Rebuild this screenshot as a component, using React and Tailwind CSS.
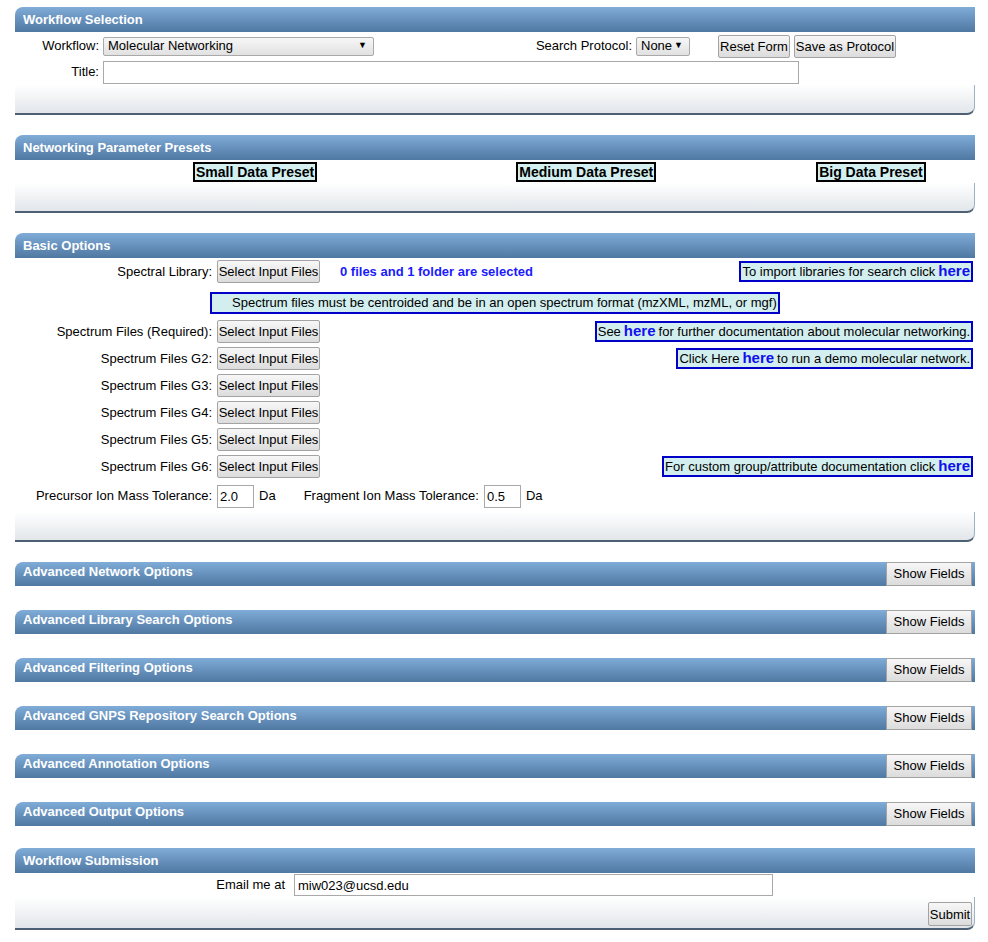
import React from 'react';

const FONT = { fontFamily: '"Liberation Sans", Arial, sans-serif' };

function Header({ title, children }) {
  return (
    <div className="flex h-[25px] items-center justify-between rounded-tl-[8px] bg-gradient-to-b from-[#80acd8] to-[#4f78a2] pl-[8px]">
      <span className="text-[13px] font-bold text-white">{title}</span>
      {children}
    </div>
  );
}

function Footer({ children, h = 'h-[30px]' }) {
  return (
    <div className={`${h} flex items-center justify-end rounded-br-[8px] border-r border-b-2 border-r-[#9fb0c2] border-b-[#4d6074] bg-gradient-to-b from-white to-[#e2e6ea] pr-[2px]`}>
      {children}
    </div>
  );
}

function Btn({ children, className = '' }) {
  return (
    <button className={`h-[23px] whitespace-nowrap rounded-[2px] border border-[#a3a3a3] bg-gradient-to-b from-[#f7f7f7] to-[#dcdcdc] px-0 text-[13px] leading-none text-black ${className}`}>
      {children}
    </button>
  );
}

function FakeSelect({ value, className = '' }) {
  return (
    <div className={`flex h-[19px] items-center justify-between rounded-[2px] border border-[#a9a9a9] bg-gradient-to-b from-[#f7f7f7] to-[#e1e1e1] pl-[4px] pr-[6px] text-[13px] ${className}`}>
      <span>{value}</span>
      <span className="text-[9px]">▼</span>
    </div>
  );
}

function InfoBox({ children }) {
  return (
    <div className="flex h-[21px] items-center whitespace-nowrap border-2 border-[#0000c8] bg-[#d2eeee] px-[1px] text-[13px] text-black">
      {children}
    </div>
  );
}

function Here({ end }) {
  return (
    <span className={`${end ? 'ml-[3px]' : 'mx-[3px]'} text-[15px] font-bold text-[#1010ee]`}>here</span>
  );
}

function FileRow({ label, right }) {
  return (
    <div className="flex h-[27px] items-center pr-[2px]">
      <div className="w-[197px] text-right">{label}</div>
      <Btn className="ml-[5px] w-[103px]">Select Input Files</Btn>
      <div className="flex flex-1 justify-end">{right}</div>
    </div>
  );
}

const ADVANCED = [
  'Advanced Network Options',
  'Advanced Library Search Options',
  'Advanced Filtering Options',
  'Advanced GNPS Repository Search Options',
  'Advanced Annotation Options',
  'Advanced Output Options',
];

export default function App() {
  return (
    <div className="min-h-[942px] bg-white pl-[15px] pr-[13px] pt-[7px] text-[13px] text-black" style={FONT}>
      {/* Workflow Selection */}
      <section>
        <Header title="Workflow Selection" />
        <div className="flex h-[27px] items-center pt-[1px]">
          <div className="w-[84px] text-right">Workflow:</div>
          <FakeSelect value="Molecular Networking" className="ml-[4px] w-[271px]" />
          <div className="w-[258px] text-right">Search Protocol:</div>
          <FakeSelect value="None" className="ml-[4px] w-[54px]" />
          <Btn className="ml-[28px] w-[72px]">Reset Form</Btn>
          <Btn className="ml-[4px] w-[102px]">Save as Protocol</Btn>
        </div>
        <div className="flex h-[26px] items-center">
          <div className="w-[84px] text-right">Title:</div>
          <input className="ml-[4px] h-[23px] w-[696px] border border-[#a9a9a9] bg-white" />
        </div>
        <Footer />
      </section>

      {/* Presets */}
      <section className="mt-[20px]">
        <Header title="Networking Parameter Presets" />
        <div className="flex h-[23px] items-center">
          <button className="ml-[178px] h-[20px] border-2 border-black bg-[#d3efef] px-[1px] text-[14px] leading-none font-bold">Small Data Preset</button>
          <button className="ml-[199px] h-[20px] border-2 border-black bg-[#d3efef] px-[1px] text-[14px] leading-none font-bold">Medium Data Preset</button>
          <button className="ml-[160px] h-[20px] border-2 border-black bg-[#d3efef] px-[1px] text-[14px] leading-none font-bold">Big Data Preset</button>
        </div>
        <Footer />
      </section>

      {/* Basic Options */}
      <section className="mt-[20px]">
        <Header title="Basic Options" />
        <div className="flex h-[27px] items-center pr-[2px]">
          <div className="w-[197px] text-right">Spectral Library:</div>
          <Btn className="ml-[5px] w-[103px]">Select Input Files</Btn>
          <span className="ml-[20px] font-bold text-[#1a1aff]">0 files and 1 folder are selected</span>
          <div className="flex flex-1 justify-end">
            <InfoBox>To import libraries for search click<Here end /></InfoBox>
          </div>
        </div>
        <div className="pt-[7px] pb-[4px]">
          <div className="ml-[195px] flex h-[22px] w-[570px] items-center whitespace-nowrap border-2 border-[#0000c8] bg-[#d2eeee] pl-[20px]">
            Spectrum files must be centroided and be in an open spectrum format (mzXML, mzML, or mgf)
          </div>
        </div>
        <FileRow
          label="Spectrum Files (Required):"
          right={<InfoBox>See<Here />for further documentation about molecular networking.</InfoBox>}
        />
        <FileRow
          label="Spectrum Files G2:"
          right={<InfoBox>Click Here<Here />to run a demo molecular network.</InfoBox>}
        />
        <FileRow label="Spectrum Files G3:" />
        <FileRow label="Spectrum Files G4:" />
        <FileRow label="Spectrum Files G5:" />
        <FileRow
          label="Spectrum Files G6:"
          right={<InfoBox>For custom group/attribute documentation click<Here end /></InfoBox>}
        />
        <div className="flex h-[32px] items-center">
          <div className="w-[197px] text-right">Precursor Ion Mass Tolerance:</div>
          <input defaultValue="2.0" className="ml-[5px] h-[23px] w-[37px] border border-[#a9a9a9] pl-[2px]" />
          <span className="ml-[5px]">Da</span>
          <span className="ml-[28px]">Fragment Ion Mass Tolerance:</span>
          <input defaultValue="0.5" className="ml-[5px] h-[23px] w-[37px] border border-[#a9a9a9] pl-[2px]" />
          <span className="ml-[5px]">Da</span>
        </div>
        <Footer />
      </section>

      {/* Advanced sections */}
      <div className="mt-[20px] flex flex-col gap-[24px]">
        {ADVANCED.map((t) => (
          <div key={t} className="flex h-[24px] items-stretch justify-between rounded-tl-[8px] bg-gradient-to-b from-[#80acd8] to-[#4f78a2] pl-[8px] pr-[3px]">
            <span className="text-[13px] leading-[20px] font-bold text-white">{t}</span>
            <button className="w-[86px] whitespace-nowrap border border-[#a3a3a3] bg-gradient-to-b from-[#f7f7f7] to-[#dcdcdc] text-[13px] text-black">
              Show Fields
            </button>
          </div>
        ))}
      </div>

      {/* Submission */}
      <section className="mt-[22px]">
        <Header title="Workflow Submission" />
        <div className="flex h-[24px] items-center">
          <div className="w-[270px] text-right">Email me at</div>
          <input defaultValue="miw023@ucsd.edu" className="ml-[9px] h-[22px] w-[479px] border border-[#a9a9a9] pl-[3px]" />
        </div>
        <Footer h="h-[33px] pt-[3px]">
          <Btn className="h-[24px] w-[44px]">Submit</Btn>
        </Footer>
      </section>
    </div>
  );
}
